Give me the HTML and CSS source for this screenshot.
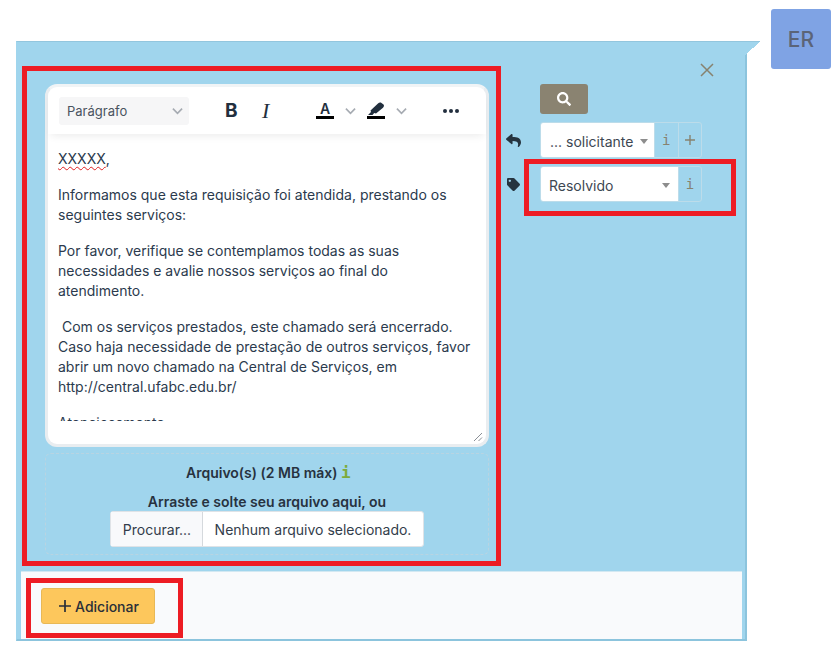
FILE: index.html
```html
<!DOCTYPE html>
<html lang="pt-BR">
<head>
    <meta charset="UTF-8">
    <meta name="viewport" content="width=device-width, initial-scale=1.0">
    <title>Chamado</title>
    <link rel="stylesheet" href="styles.css">
</head>
<body>
    <div class="page">
        <div class="avatar">ER</div>

        <div class="card">
            <div class="card-tail"></div>
            <div class="card-body">
                <div class="main-col">
                    <div class="editor">
                        <div class="toolbar">
                            <div class="style-select">
                                <span>Parágrafo</span>
                                <svg class="chevron" viewBox="0 0 12 8"><path d="M1 1.500l5 5 5-5"/></svg>
                            </div>
                            <span class="tool-b">B</span>
                            <span class="tool-i">I</span>
                            <span class="tool-color">
                                <span class="tool-a">A</span>
                                <span class="tool-bar"></span>
                            </span>
                            <svg class="chevron chevron-a" viewBox="0 0 12 8"><path d="M1 1.500l5 5 5-5"/></svg>
                            <span class="tool-color tool-pen">
                                <svg class="pen" viewBox="0 0 16 13"><path d="M0 13l3-3-.5-1.500L10 1.500c1-1 2.500-1.200 3.500-.5l2 1.600c.8.8.5 2.200-.5 3.100L8 11.500 6.200 11 4.500 13z"/></svg>
                                <span class="tool-bar"></span>
                            </span>
                            <svg class="chevron chevron-b" viewBox="0 0 12 8"><path d="M1 1.500l5 5 5-5"/></svg>
                            <span class="tool-dots"><i></i><i></i><i></i></span>
                        </div>
                        <div class="content">
                            <p><span class="misspelt">XXXXX</span>,</p>
                            <p>Informamos que esta requisição foi atendida, prestando os seguintes serviços:</p>
                            <p>Por favor, verifique se contemplamos todas as suas necessidades e avalie nossos serviços ao final do atendimento.</p>
                            <p>&nbsp;Com os serviços prestados, este chamado será encerrado. Caso haja necessidade de prestação de outros serviços, favor abrir um novo chamado na Central de Serviços, em http://central.ufabc.edu.br/</p>
                            <p>Atenciosamente,</p>
                        </div>
                        <svg class="resize" viewBox="0 0 10 10"><path d="M9 1L1 9M9 5.500L5.500 9"/></svg>
                    </div>

                    <div class="dropzone">
                        <div class="drop-title">Arquivo(s) (2 MB máx) <span class="drop-info">i</span></div>
                        <div class="drop-hint">Arraste e solte seu arquivo aqui, ou</div>
                        <div class="file-input">
                            <span class="file-btn">Procurar...</span>
                            <span class="file-name">Nenhum arquivo selecionado.</span>
                        </div>
                    </div>
                </div>

                <div class="side-col">
                    <svg class="close" viewBox="0 0 14 14"><path d="M1 1l12 12M13 1L1 13"/></svg>
                    <button class="search-btn" type="button">
                        <svg viewBox="0 0 512 512"><path d="M505 442.700L405.300 343c-4.500-4.500-10.600-7-17-7H372c27.600-35.300 44-79.700 44-128C416 93.100 322.900 0 208 0S0 93.100 0 208s93.100 208 208 208c48.300 0 92.700-16.400 128-44v16.300c0 6.400 2.500 12.500 7 17l99.700 99.700c9.400 9.400 24.600 9.400 33.900 0l28.300-28.300c9.400-9.400 9.400-24.600.1-34zM208 336c-70.700 0-128-57.200-128-128 0-70.700 57.200-128 128-128 70.700 0 128 57.200 128 128 0 70.700-57.200 128-128 128z"/></svg>
                    </button>
                    <div class="field-row">
                        <svg class="field-icon" viewBox="0 0 512 512"><path d="M8.309 189.836L184.313 37.851C199.719 24.546 224 35.347 224 56.015v80.053c160.629 1.839 288 34.032 288 186.258 0 61.441-39.581 122.309-83.333 154.132-13.653 9.931-33.111-2.533-28.077-18.631 45.344-145.012-21.507-183.510-176.590-185.742V360c0 20.700-24.300 31.453-39.687 18.164l-176.004-152c-11.071-9.562-11.086-26.753 0-36.328z"/></svg>
                        <div class="field-group">
                            <div class="field-select field-select-short"><span>... solicitante</span><b class="caret"></b></div>
                            <span class="addon">i</span>
                            <span class="addon"><svg class="addon-plus" viewBox="0 0 12 12"><path d="M6 1v10M1 6h10"/></svg></span>
                        </div>
                    </div>
                    <div class="field-row">
                        <svg class="field-icon field-icon-tag" viewBox="0 0 512 512"><path d="M0 252.118V48C0 21.490 21.490 0 48 0h204.118a48 48 0 0 1 33.941 14.059l211.882 211.882c18.745 18.745 18.745 49.137 0 67.882L293.823 497.941c-18.745 18.745-49.137 18.745-67.882 0L14.059 286.059A48 48 0 0 1 0 252.118zM112 64c-26.510 0-48 21.490-48 48s21.490 48 48 48 48-21.490 48-48-21.490-48-48-48z"/></svg>
                        <div class="field-group">
                            <div class="field-select field-select-long"><span>Resolvido</span><b class="caret"></b></div>
                            <span class="addon">i</span>
                        </div>
                    </div>
                </div>
            </div>

            <div class="card-footer">
                <button class="add-btn" type="button"><svg class="add-plus" viewBox="0 0 12 12"><path d="M6 0v12M0 6h12"/></svg> Adicionar</button>
            </div>
        </div>

        <!-- marcas vermelhas por cima da tela -->
        <div class="mark mark-editor"></div>
        <div class="mark mark-status"></div>
        <div class="mark mark-add"></div>
    </div>
</body>
</html>
```

FILE: styles.css
```css
* {
    box-sizing: border-box;
}

body {
    margin: 0;
    background-color: #fff;
    font-family: Inter, "Liberation Sans", sans-serif;
    font-size: 14px;
    color: #2b3644;
}

.page {
    position: relative;
    width: 840px;
    height: 651px;
    overflow: hidden;
    padding: 41px 0 0 16px;
}

.avatar {
    position: absolute;
    left: 771px;
    top: 9px;
    width: 60px;
    height: 60px;
    border-radius: 3px;
    background-color: #7fa3e4;
    color: #5b6478;
    font-size: 21px;
    font-weight: 500;
    display: flex;
    align-items: center;
    justify-content: center;
}

.card {
    position: relative;
    width: 731px;
    height: 600px;
    background-color: #a0d5ed;
    border-top: 1px solid #93c6de;
    border-right: 2px solid #8cc4dd;
    border-bottom: 2px solid #8cc4dd;
    border-left: 1px solid #a0d5ed;
    display: flex;
    flex-direction: column;
}

/* the little corner pointing at the avatar */
.card-tail {
    position: absolute;
    left: 728px;
    top: -1px;
    width: 15px;
    height: 14px;
    background: linear-gradient(to bottom right, #a0d5ed 50%, transparent 50%);
    border-top: 1px solid #93c6de;
}

.card-body {
    flex: 1;
    display: flex;
    min-height: 0;
}

.main-col {
    width: 472px;
    padding: 42px 0 0 28px;
}

.editor {
    position: relative;
    width: 444px;
    height: 363px;
    background-color: #fff;
    border: 3px solid #e9edf0;
    border-top-color: #f0f4f6;
    border-radius: 12px;
}

.toolbar {
    height: 47px;
    display: flex;
    align-items: center;
    padding: 0 0 0 11px;
    box-shadow: 0 5px 8px -3px rgba(0, 0, 0, 0.08);
}

.style-select {
    width: 130px;
    height: 28px;
    background-color: #f6f6f7;
    border-radius: 3px;
    display: flex;
    align-items: center;
    justify-content: space-between;
    padding: 0 6px 0 8px;
    font-size: 13px;
    color: #4a5360;
}

.chevron {
    width: 11px;
    height: 8px;
    fill: none;
    stroke: #a6abb2;
    stroke-width: 1.8;
}

.tool-b {
    margin-left: 36px;
    width: 14px;
    font-size: 19px;
    font-weight: 700;
    color: #222f3e;
}

.tool-i {
    margin-left: 23px;
    width: 14px;
    font-family: "Liberation Serif", serif;
    font-size: 22px;
    font-style: italic;
    color: #222f3e;
}

.tool-color {
    margin-left: 40px;
    width: 18px;
    display: flex;
    flex-direction: column;
    align-items: center;
    color: #222f3e;
}

.tool-a {
    font-size: 14px;
    font-weight: 600;
    line-height: 13px;
    height: 13px;
}

.tool-bar {
    width: 18px;
    height: 3px;
    background-color: #000;
    margin-top: 1px;
}

.chevron-a {
    margin-left: 11px;
}

.tool-pen {
    margin-left: 11px;
}

.pen {
    width: 16px;
    height: 13px;
    fill: #222f3e;
}

.chevron-b {
    margin-left: 11px;
}

.tool-dots {
    margin-left: 36px;
    display: flex;
    gap: 2px;
}

.tool-dots i {
    width: 4px;
    height: 4px;
    border-radius: 50%;
    background-color: #222f3e;
}

.content {
    height: 287px;
    overflow: hidden;
    padding: 15px 10px 0 10px;
    line-height: 20px;
    color: #2b3a4d;
}

.content p {
    margin: 0 0 16px;
}

.misspelt {
    text-decoration: underline wavy #e02020 1px;
    text-underline-offset: 2px;
}

.resize {
    position: absolute;
    right: 3px;
    bottom: 2px;
    width: 10px;
    height: 10px;
    fill: none;
    stroke: #8a8f96;
    stroke-width: 1;
}

.dropzone {
    width: 444px;
    height: 102px;
    margin-top: 6px;
    border: 1px dashed #b8d4e2;
    border-radius: 6px;
    text-align: center;
    padding-top: 9px;
    font-weight: 600;
    color: #27323f;
}

.drop-title {
    height: 20px;
    line-height: 20px;
}

.drop-info {
    display: inline-block;
    width: 7px;
    font-family: "DejaVu Sans Mono", monospace;
    font-size: 16px;
    font-weight: 700;
    line-height: 1;
    color: #7dab3c;
}

.drop-hint {
    margin-top: 9px;
    line-height: 20px;
}

.file-input {
    width: 314px;
    height: 36px;
    margin: -1px 0 0 64px;
    display: flex;
    background-color: #fff;
    border: 1px solid #dfe3e7;
    border-radius: 3px;
    font-weight: 400;
    color: #333d4b;
    line-height: 36px;
}

.file-btn {
    width: 92px;
    padding-left: 1px;
    background-color: #f8f9fb;
    border-right: 1px solid #d5d9dd;
}

.file-name {
    flex: 1;
}

.side-col {
    position: relative;
    flex: 1;
    padding: 42px 0 0 51px;
}

.close {
    position: absolute;
    left: 211px;
    top: 21px;
    width: 14px;
    height: 14px;
    fill: none;
    stroke: #87826f;
    stroke-width: 1.5;
}

.search-btn {
    display: flex;
    align-items: center;
    justify-content: center;
    width: 48px;
    height: 30px;
    padding: 0;
    background-color: #8a8371;
    border: none;
    border-radius: 3px;
}

.search-btn svg {
    width: 14px;
    height: 14px;
    fill: #fff;
}

.field-row {
    position: relative;
    margin-top: 8px;
}

.field-icon {
    position: absolute;
    left: -34px;
    top: 11px;
    width: 15px;
    height: 15px;
    fill: #26343f;
}

.field-icon-tag {
    left: -33px;
    top: 12px;
    width: 13px;
    height: 13px;
}

.field-group {
    display: flex;
    width: 162px;
    height: 36px;
    border: 1px solid #bcdcea;
    border-radius: 3px;
}

.field-select {
    display: flex;
    align-items: center;
    justify-content: space-between;
    padding-top: 2px;
    background-color: #fff;
    border-radius: 2px 0 0 2px;
    color: #3d4752;
}

.field-select-short {
    width: 113px;
    padding-right: 6px;
    padding-left: 9px;
}

.field-select-long {
    width: 137px;
    padding-right: 8px;
    padding-left: 8px;
}

.caret {
    width: 0;
    height: 0;
    border-left: 4px solid transparent;
    border-right: 4px solid transparent;
    border-top: 5px solid #8d8d8d;
}

.addon {
    width: 24px;
    flex: 1;
    display: flex;
    align-items: center;
    justify-content: center;
    border-left: 1px solid #bcdcea;
    font-family: "DejaVu Sans Mono", monospace;
    font-size: 14px;
    color: #87826f;
}

.addon-plus {
    width: 12px;
    height: 12px;
    fill: none;
    stroke: #87826f;
    stroke-width: 1.4;
}

.card-footer {
    height: 68px;
    margin: 0 3px 0 4px;
    background-color: #f9fafc;
    border-top: 1px solid #d3e8f2;
    padding: 16px 0 0 20px;
}

.add-btn {
    display: flex;
    align-items: center;
    justify-content: center;
    gap: 4px;
    height: 36px;
    width: 114px;
    padding: 0 0 0 2px;
    background-color: #fdc75c;
    border: 1px solid #e8b856;
    border-radius: 3px;
    font-family: inherit;
    font-size: 14px;
    font-weight: 500;
    color: #2a2f38;
}

.add-plus {
    width: 12px;
    height: 12px;
    fill: none;
    stroke: #2a2f38;
    stroke-width: 1.7;
}

.mark {
    position: absolute;
    border: 5px solid #ed1c24;
}

.mark-editor {
    left: 22px;
    top: 66px;
    width: 479px;
    height: 500px;
}

.mark-status {
    left: 524px;
    top: 159px;
    width: 212px;
    height: 57px;
}

.mark-add {
    left: 26px;
    top: 578px;
    width: 157px;
    height: 60px;
}
```
